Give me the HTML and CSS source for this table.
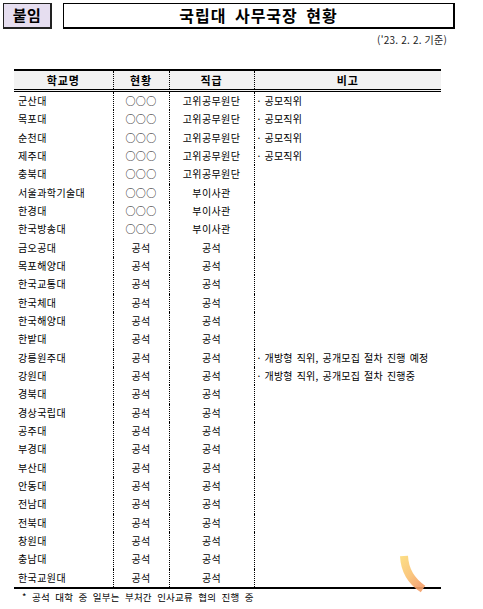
FILE: index.html
```html
<!DOCTYPE html>
<html lang="ko">
<head>
<meta charset="utf-8">
<link rel="stylesheet" href="styles.css">
</head>
<body>
<div class="page">
  <div class="top">
    <div class="tag">붙임</div>
    <div class="title">국립대 사무국장 현황</div>
  </div>
  <div class="date">('23. 2. 2. 기준)</div>
  <table class="tbl">
    <colgroup>
      <col class="c1"><col class="c2"><col class="c3"><col class="c4">
    </colgroup>
    <thead>
      <tr><th>학교명</th><th>현황</th><th>직급</th><th>비고</th></tr>
    </thead>
    <tbody>
      <tr><td class="nm">군산대</td><td>○○○</td><td>고위공무원단</td><td class="rm">· 공모직위</td></tr>
      <tr><td class="nm">목포대</td><td>○○○</td><td>고위공무원단</td><td class="rm">· 공모직위</td></tr>
      <tr><td class="nm">순천대</td><td>○○○</td><td>고위공무원단</td><td class="rm">· 공모직위</td></tr>
      <tr><td class="nm">제주대</td><td>○○○</td><td>고위공무원단</td><td class="rm">· 공모직위</td></tr>
      <tr><td class="nm">충북대</td><td>○○○</td><td>고위공무원단</td><td class="rm"></td></tr>
      <tr><td class="nm">서울과학기술대</td><td>○○○</td><td>부이사관</td><td class="rm"></td></tr>
      <tr><td class="nm">한경대</td><td>○○○</td><td>부이사관</td><td class="rm"></td></tr>
      <tr><td class="nm">한국방송대</td><td>○○○</td><td>부이사관</td><td class="rm"></td></tr>
      <tr><td class="nm">금오공대</td><td>공석</td><td>공석</td><td class="rm"></td></tr>
      <tr><td class="nm">목포해양대</td><td>공석</td><td>공석</td><td class="rm"></td></tr>
      <tr><td class="nm">한국교통대</td><td>공석</td><td>공석</td><td class="rm"></td></tr>
      <tr><td class="nm">한국체대</td><td>공석</td><td>공석</td><td class="rm"></td></tr>
      <tr><td class="nm">한국해양대</td><td>공석</td><td>공석</td><td class="rm"></td></tr>
      <tr><td class="nm">한밭대</td><td>공석</td><td>공석</td><td class="rm"></td></tr>
      <tr><td class="nm">강릉원주대</td><td>공석</td><td>공석</td><td class="rm">· 개방형 직위, 공개모집 절차 진행 예정</td></tr>
      <tr><td class="nm">강원대</td><td>공석</td><td>공석</td><td class="rm">· 개방형 직위, 공개모집 절차 진행중</td></tr>
      <tr><td class="nm">경북대</td><td>공석</td><td>공석</td><td class="rm"></td></tr>
      <tr><td class="nm">경상국립대</td><td>공석</td><td>공석</td><td class="rm"></td></tr>
      <tr><td class="nm">공주대</td><td>공석</td><td>공석</td><td class="rm"></td></tr>
      <tr><td class="nm">부경대</td><td>공석</td><td>공석</td><td class="rm"></td></tr>
      <tr><td class="nm">부산대</td><td>공석</td><td>공석</td><td class="rm"></td></tr>
      <tr><td class="nm">안동대</td><td>공석</td><td>공석</td><td class="rm"></td></tr>
      <tr><td class="nm">전남대</td><td>공석</td><td>공석</td><td class="rm"></td></tr>
      <tr><td class="nm">전북대</td><td>공석</td><td>공석</td><td class="rm"></td></tr>
      <tr><td class="nm">창원대</td><td>공석</td><td>공석</td><td class="rm"></td></tr>
      <tr><td class="nm">충남대</td><td>공석</td><td>공석</td><td class="rm"></td></tr>
      <tr><td class="nm">한국교원대</td><td>공석</td><td>공석</td><td class="rm"></td></tr>
    </tbody>
  </table>
  <div class="note">* 공석 대학 중 일부는 부처간 인사교류 협의 진행 중</div>
  <svg class="stroke" width="40" height="45" viewBox="0 0 40 45">
    <defs>
      <linearGradient id="g" x1="0" y1="0" x2="0.6" y2="1">
        <stop offset="0" stop-color="#fcd877"/>
        <stop offset="0.6" stop-color="#f9bf70"/>
        <stop offset="1" stop-color="#f4a068"/>
      </linearGradient>
    </defs>
    <path d="M 6 1 Q 7 22 25 34" fill="none" stroke="url(#g)" stroke-width="8" opacity="0.9"/>
  </svg>
</div>
</body>
</html>
```

FILE: styles.css
```css
html, body {
  margin: 0;
  padding: 0;
  background: #ffffff;
}
body {
  font-family: "Noto Sans CJK KR", "Noto Sans", sans-serif;
  color: #000;
}
.page {
  position: relative;
  width: 483px;
  height: 609px;
  overflow: hidden;
}
.top {
  display: flex;
  gap: 11px;
  padding: 3px 0 0 3px;
}
.tag {
  box-sizing: border-box;
  width: 49px;
  height: 26px;
  background: #e6def0;
  border: 1px solid #222;
  border-right-width: 2px;
  border-bottom-width: 2px;
  font-size: 15px;
  font-weight: bold;
  line-height: 22px;
  text-align: center;
  letter-spacing: 0.5px;
}
.title {
  box-sizing: border-box;
  width: 392px;
  height: 26px;
  border: 1px solid #000;
  border-right-width: 2px;
  border-bottom-width: 2px;
  font-size: 16px;
  font-weight: bold;
  line-height: 22px;
  text-align: center;
  letter-spacing: 1px;
  word-spacing: 3px;
}
.date {
  width: 447px;
  text-align: right;
  font-size: 10px;
  line-height: 12px;
  margin-top: 5px;
  color: #222;
  letter-spacing: 0.2px;
}
.tbl {
  margin: 23px 0 0 14px;
  width: 427px;
  border-collapse: collapse;
  table-layout: fixed;
  border-top: 2px solid #000;
  border-bottom: 2px solid #000;
}
.c1 { width: 99px; }
.c2 { width: 56px; }
.c3 { width: 85px; }
.c4 { width: 187px; }
.tbl th {
  background: #f2f2f2;
  height: 18px;
  padding: 0;
  font-size: 11px;
  font-weight: bold;
  letter-spacing: 0.8px;
  border-bottom: 3px double #000;
  border-left: 1px dotted #000;
  line-height: 18px;
}
.tbl th:first-child, .tbl td:first-child {
  border-left: none;
}
.tbl td {
  height: 18.33px;
  padding: 0;
  font-size: 10px;
  line-height: 12px;
  text-align: center;
  border-left: 1px dotted #000;
  letter-spacing: 0.4px;
  white-space: nowrap;
}
.tbl td.nm {
  text-align: left;
  padding-left: 4px;
}
.tbl td.rm {
  text-align: left;
  padding-left: 3px;
  word-spacing: 1px;
  letter-spacing: 0.2px;
}
.note {
  margin: 2px 0 0 22px;
  font-size: 9.5px;
  line-height: 12px;
  word-spacing: 2.5px;
  letter-spacing: 0.2px;
}
.stroke {
  position: absolute;
  left: 398px;
  top: 555px;
}
```
